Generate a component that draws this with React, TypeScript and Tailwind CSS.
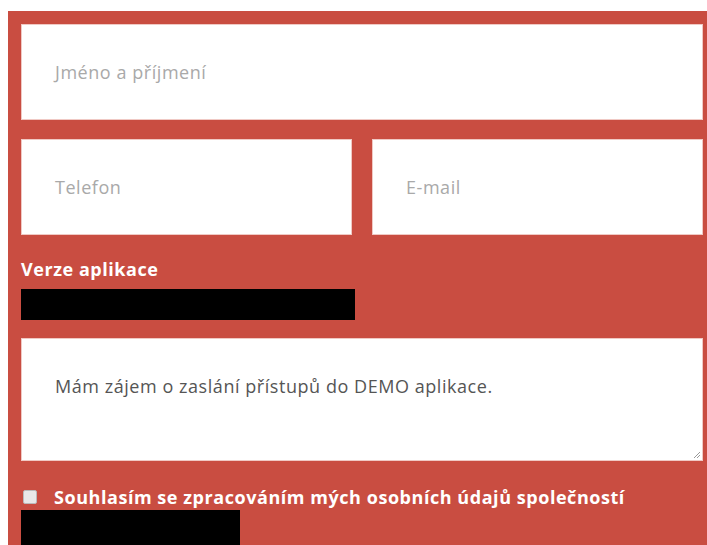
export default function App() {
  const field =
    "h-[96px] bg-white border border-[#f0c9c4] px-[33px] flex items-center text-[18px] tracking-[0.55px] text-[#a9a9a9]";
  return (
    <div className="min-h-[545px] bg-white pt-[11px] pl-[8px] overflow-hidden" style={{ fontFamily: '"Open Sans", "Noto Sans", sans-serif' }}>
      <div className="bg-[#c94d41] pt-[13px] pl-[13px] pr-[4px] pb-[20px]">
        <div className={field}>Jméno a příjmení</div>
        <div className="mt-[19px] grid grid-cols-2 gap-[20px]">
          <div className={field}>Telefon</div>
          <div className={field}>E-mail</div>
        </div>
        <div className="mt-[22px] text-[18px] tracking-[0.55px] font-bold text-white leading-[24px]">Verze aplikace</div>
        <div className="mt-[8px] h-[31px] w-[334px] bg-black" />
        <div className="relative mt-[18px] h-[123px] bg-white border border-[#f0c9c4] px-[33px] pt-[35px] text-[18px] tracking-[0.55px] leading-[24px] text-[#555]">
          Mám zájem o zaslání přístupů do DEMO aplikace.
          <svg className="absolute right-[1px] bottom-[1px]" width="9" height="9" viewBox="0 0 9 9">
            <path d="M8 2 L2 8 M8 5 L5 8" stroke="#999" strokeWidth="1" />
          </svg>
        </div>
        <div className="mt-[24px] flex items-center gap-[17px] pl-[2px]">
          <span className="w-[14px] h-[14px] rounded-[2px] bg-[#e9e9e9] border border-[#bbb] shrink-0" />
          <span className="text-[18px] tracking-[0.55px] font-bold text-white leading-[24px]">
            Souhlasím se zpracováním mých osobních údajů společností
          </span>
        </div>
        <div className="mt-[1px] h-[36px] w-[219px] bg-black" />
      </div>
    </div>
  );
}
